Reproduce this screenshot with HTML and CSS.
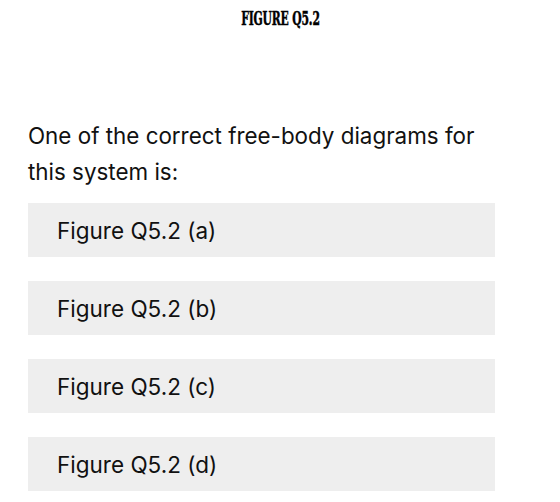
FILE: index.html
```html
<!DOCTYPE html>
<html lang="en">
  <head>
    <meta charset="UTF-8" />
    <meta name="viewport" content="width=device-width, initial-scale=1.0" />
    <title>Question Q5.2</title>
    <link rel="stylesheet" href="styles.css">
  </head>
  <body>
    <div class="figure-caption">
      <span class="figure-label">FIGURE Q5.2</span>
    </div>

    <div class="question">
      <p class="question-text">
        One of the correct free-body diagrams for this system is:
      </p>
      <ul class="answer-list">
        <li class="answer">Figure Q5.2 (a)</li>
        <li class="answer">Figure Q5.2 (b)</li>
        <li class="answer">Figure Q5.2 (c)</li>
        <li class="answer">Figure Q5.2 (d)</li>
      </ul>
    </div>
  </body>
</html>
```

FILE: styles.css
```css
* {
  margin: 0;
  padding: 0;
  box-sizing: border-box;
}

body {
  font-family: Inter, "Liberation Sans", Arial, sans-serif;
  background-color: #ffffff;
  color: #111;
  min-height: 100vh;
}

.figure-caption {
  display: flex;
  justify-content: center;
  padding-top: 8px;
  height: 118px;
}

.figure-label {
  display: inline-block;
  font-family: "DejaVu Serif", "Liberation Serif", serif;
  font-weight: 900;
  font-size: 18px;
  line-height: 22px;
  letter-spacing: -0.3px;
  transform: scaleX(0.6);
  color: #000;
  -webkit-text-stroke: 0.5px #000;
}

.question {
  padding: 0 65px 0 28px;
}

.question-text {
  font-size: 22.4px;
  line-height: 36px;
  margin-bottom: 13px;
}

.answer-list {
  list-style: none;
  display: flex;
  flex-direction: column;
  gap: 24px;
}

.answer {
  background-color: #eeeeee;
  height: 54px;
  display: flex;
  align-items: center;
  padding-left: 29px;
  font-size: 22.5px;
}
```
